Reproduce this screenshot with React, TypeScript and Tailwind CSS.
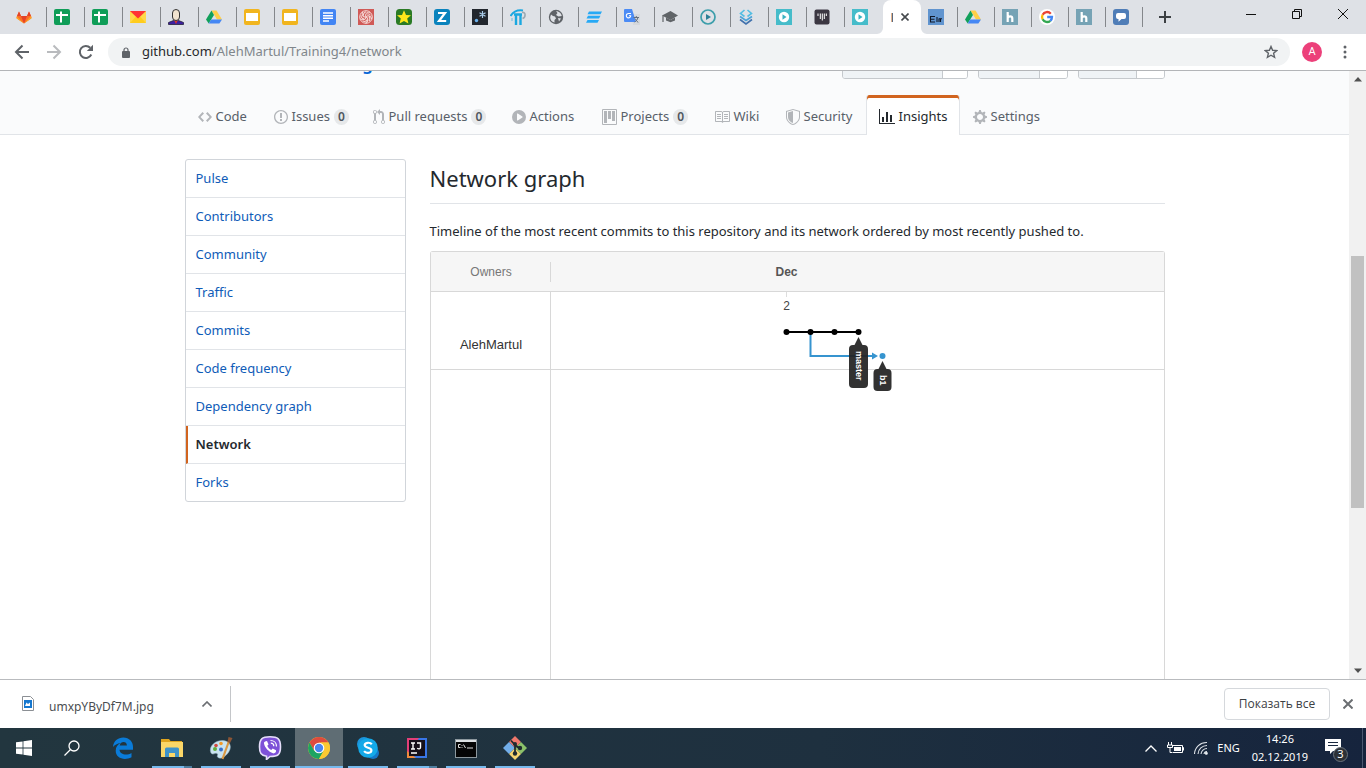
import React from "react";

type Kids = { children: React.ReactNode };

function Fav({ children }: Kids) {
  return (
    <svg viewBox="0 0 16 16" className="size-4" aria-hidden="true">
      {children}
    </svg>
  );
}

const Gitlab = () => (
  <Fav>
    <path d="M8 14.500 1 9.500l-.5-1.300L3 2.500l2 4.500h6l2-4.500 2.500 5.700L15 9.500z" fill="#fc6d26" />
    <path d="M8 14.500 5 7h6z" fill="#e24329" />
    <path d="M1 7 .3 9.200 8 14.500 .8 7.200zM15 7l.7 2.200L8 14.500z" fill="#fca326" />
    <path d="M3 2.500 1 7h4zM13 2.500l2 4.500h-4z" fill="#e24329" />
  </Fav>
);
const Sheets = () => (
  <Fav>
    <rect width="16" height="16" rx="2" fill="#0f9d58" />
    <path d="M2 6h12M7 2.500v11" stroke="#fff" strokeWidth="2" />
  </Fav>
);
const Mail = () => (
  <Fav>
    <rect y="2" width="16" height="12" fill="#ffd84a" />
    <path d="M0 14 6 7.500h4L16 14z" fill="#ffcc1e" />
    <path d="M0 2h16L8 9.500z" fill="#f33" />
  </Fav>
);
const Person = () => (
  <Fav>
    <path d="M.5 15.500v-2l5-2h5l5 2v2z" fill="#3b1fa0" stroke="#24203a" strokeWidth=".8" />
    <path d="m6 11 2 4 2-4z" fill="#d8342c" />
    <rect x="4.500" y=".5" width="7" height="11" rx="3.500" fill="#f1e3cf" stroke="#333" />
  </Fav>
);
const Drive = () => (
  <Fav>
    <path d="M5.500 1.500h5L16 10.500h-5z" fill="#ffcf48" />
    <path d="M5.500 1.500 0 10.500l2.700 4L8 6z" fill="#11a05b" />
    <path d="M5.200 10.500H16l-2.600 4H2.700z" fill="#4587f4" />
  </Fav>
);
const Slides = () => (
  <Fav>
    <rect width="16" height="16" rx="2" fill="#f1b51f" />
    <rect x="2" y="4" width="12" height="8" fill="#fff" />
  </Fav>
);
const Docs = () => (
  <Fav>
    <rect width="16" height="16" rx="2" fill="#4285f4" />
    <path d="M3 4h10M3 6.700h10M3 9.300h10M3 12h6" stroke="#fff" strokeWidth="1.500" />
  </Fav>
);
const Swirl = () => (
  <Fav>
    <rect width="16" height="16" fill="#d05a57" />
    <g fill="none" stroke="#f6d9d6" strokeWidth="1">
      <circle cx="8" cy="8" r="6.300" />
      {[0, 72, 144, 216, 288].map((a) => (
        <path key={a} d="M8 8C6.500 5.500 8.500 2.800 12 3.200M8.500 5.200C10 4.500 12 5 13 6.500" transform={`rotate(${a} 8 8)`} />
      ))}
    </g>
  </Fav>
);
const Star = () => (
  <Fav>
    <rect width="16" height="16" rx="3.500" fill="#2a7a25" />
    <path d="m8 1.200 2 4.700 5 .4-3.800 3.300L12.400 14.500 8 11.900l-4.400 2.600 1.200-4.900L1 6.300l5-.4z" fill="#ffe81a" />
  </Fav>
);
const ZIcon = () => (
  <Fav>
    <rect width="16" height="16" rx="3" fill="#0a83bd" />
    <path d="M4 4h7L5 12h7.200" fill="none" stroke="#fff" strokeWidth="2.200" />
  </Fav>
);
const DotStar = () => (
  <Fav>
    <rect width="16" height="16" fill="#22272e" />
    <circle cx="4.500" cy="11.500" r="1.700" fill="#6cb2ee" />
    <path d="M10.500 2v7M7.500 3.700l6 3.600M13.500 3.700l-6 3.600" stroke="#a9cbe8" strokeWidth="1.200" />
  </Fav>
);
const Bridge = () => (
  <Fav>
    <path d="M.5 7C3 3 8 .8 13 1.500" fill="none" stroke="#1ba8e0" strokeWidth="2" />
    <path d="M6 4.500V16M10.500 4.500V16M4 5.500h8" stroke="#1ba8e0" strokeWidth="2.400" />
    <path d="M12 3.500c4-1 4 5 .5 6" fill="none" stroke="#9aa9b3" strokeWidth="1.600" />
    <path d="M2 9v3" stroke="#8ac6de" strokeWidth="1.400" />
  </Fav>
);
const Globe = () => (
  <Fav>
    <circle cx="8" cy="8" r="7.200" fill="#5f6368" />
    <path d="M3 5.500 5 7l2 .5 1 2-1.500 1.500v2.500C3.500 13 2 10.500 2.200 8zM8 2.200 9.500 4 8 6l2.500 1.500 3.300-.5C13.500 4.500 11 2 8 2.200zM10 9l3 .5-2 3z" fill="#dee1e6" />
  </Fav>
);
const Bars = () => (
  <Fav>
    <path d="M3 2.500h13l-1.500 2.800H1.500zM2 6.700h12.500L13 9.500H.5zM1.500 11H13l-1.500 2.800H0z" fill="#27a9f5" />
  </Fav>
);
const Translate = () => (
  <Fav>
    <path d="M8 5h8v11H9z" fill="#d5d8dc" />
    <path d="M1 0h7l4 13H1a1 1 0 0 1-1-1V1a1 1 0 0 1 1-1z" fill="#4b8bf5" />
    <path d="M7 4.500H4.700a2.200 2.200 0 1 0 2 2.300H5" fill="none" stroke="#fff" strokeWidth="1.100" />
    <path d="M9.500 8.500H15M12.300 7v1.500M10.500 13c2-1 3-2.500 3.300-4.300M11 9.500l3 4" fill="none" stroke="#637080" />
  </Fav>
);
const Grad = () => (
  <Fav>
    <path d="m8.500 2 7.500 4.500-7.500 4.500L0 6.500z" fill="#606468" />
    <path d="M4 8.500 8.500 11 13 8.500v3l-4.500 1.800L4 11.500z" fill="#606468" />
    <path d="M1 6.500V13" stroke="#606468" strokeWidth="1.200" />
  </Fav>
);
const PlayRing = () => (
  <Fav>
    <circle cx="8" cy="8" r="7" fill="none" stroke="#3d9eab" strokeWidth="1.700" />
    <path d="m6 5 5 3-5 3z" fill="#2c7f96" />
  </Fav>
);
const Layers = () => (
  <Fav>
    <g fill="none" strokeWidth="1.600">
      <path d="M6.500 1 2.500 4.500 6.500 7.500M9.500 1l4 3.500-4 3" stroke="#52bde2" />
      <path d="m2 7.500 6 4 6-4" stroke="#4aa3d8" />
      <path d="m2 10.500 6 4.500 6-4.500" stroke="#4272ad" />
    </g>
  </Fav>
);
const PlayCyan = () => (
  <Fav>
    <rect width="16" height="16" fill="#46bcca" />
    <circle cx="8" cy="8" r="5.200" fill="#fff" />
    <path d="m6.500 5.200 4 2.800-4 2.800z" fill="#3ab2c1" />
  </Fav>
);
const DarkLines = () => (
  <Fav>
    <rect x=".5" y=".5" width="15" height="15" rx="2" fill="#3b3742" />
    <path d="M4 4.500v2.500M6.300 4.500v5.500M8.300 4.500v7M10.300 4.500V10M12.300 4.500v2.500" stroke="#fff" strokeWidth="1" />
  </Fav>
);
const Elm = () => (
  <Fav>
    <rect width="16" height="16" fill="#6094cf" />
    <path d="M7 7.500H2.500V13H7M2.500 10.200h4M9 8v5M11 13V9.500M11 9.700h3M12.500 10v3" fill="none" stroke="#101828" strokeWidth="1.100" />
  </Fav>
);
const HIcon = () => (
  <Fav>
    <rect width="16" height="16" fill="#76a3b5" />
    <path d="M5.700 3v10M5.700 9c.5-2 4.600-2.500 4.600.5V13" fill="none" stroke="#fff" strokeWidth="2.200" />
  </Fav>
);
const Google = () => (
  <Fav>
    <circle cx="8" cy="8" r="8" fill="#fff" />
    <g fill="none" strokeWidth="2.300">
      <path d="M11.800 4.700A5 5 0 0 0 3.600 5.700" stroke="#ea4335" />
      <path d="M3.600 5.700a5 5 0 0 0 0 4.600" stroke="#fbbc05" />
      <path d="M3.600 10.300a5 5 0 0 0 7.700 1.500" stroke="#34a853" />
      <path d="M11.300 11.800A5 5 0 0 0 13 8H8.200" stroke="#4285f4" />
    </g>
  </Fav>
);
const Chat = () => (
  <Fav>
    <rect width="16" height="16" rx="3" fill="#4f7db7" />
    <path d="M5 4h6a2 2 0 0 1 2 2v2a2 2 0 0 1-2 2H8.500L5.500 12.800V10H5a2 2 0 0 1-2-2V6a2 2 0 0 1 2-2z" fill="#fff" />
  </Fav>
);

const tabsBefore = [
  Gitlab, Sheets, Sheets, Mail, Person, Drive, Slides, Slides, Docs, Swirl, Star, ZIcon,
  DotStar, Bridge, Globe, Bars, Translate, Grad, PlayRing, Layers, PlayCyan, DarkLines, PlayCyan,
];
const tabsAfter = [Elm, Drive, HIcon, Google, HIcon, Chat];

function TabStrip() {
  return (
    <div className="flex h-[34px] shrink-0 items-center bg-[#dee1e6] pl-[9px]">
      {tabsBefore.map((Icon, i) => (
        <button
          key={i}
          aria-label={`Tab ${i + 1}`}
          className={`flex h-5 w-[38px] shrink-0 items-center pl-[7px] ${i < tabsBefore.length - 1 ? "border-r border-[#84878b]" : ""}`}
        >
          <Icon />
        </button>
      ))}
      <div className="relative flex h-full w-[38px] shrink-0 items-center gap-2 rounded-t-lg bg-white pl-2">
        <svg viewBox="0 0 6 6" className="absolute bottom-0 -left-[6px] size-[6px]" fill="#fff"><path d="M6 0v6H0a6 6 0 0 0 6-6z" /></svg>
        <svg viewBox="0 0 6 6" className="absolute -right-[6px] bottom-0 size-[6px]" fill="#fff"><path d="M0 0v6h6a6 6 0 0 1-6-6z" /></svg>
        <span className="flex h-[9px] w-[2px]">
          <span className="w-px bg-[#e3b48f]" />
          <span className="w-px bg-[#5a6a80]" />
        </span>
        <button aria-label="Close tab">
          <svg viewBox="0 0 8 8" className="size-2" stroke="#45494d" strokeWidth="1.600">
            <path d="m.5.5 7 7m0-7-7 7" />
          </svg>
        </button>
      </div>
      {tabsAfter.map((Icon, i) => (
        <button key={i} aria-label={`Tab ${i + 25}`} className="flex h-5 w-[37px] shrink-0 items-center border-r border-[#84878b] pl-[7px]">
          <Icon />
        </button>
      ))}
      <button aria-label="New tab" className="ml-4">
        <svg viewBox="0 0 12 12" className="size-3" stroke="#3c4043" strokeWidth="2">
          <path d="M6 0v12M0 6h12" />
        </svg>
      </button>
      <div className="mb-[6px] ml-auto flex items-center gap-9 pr-[18px]">
        <button aria-label="Minimize">
          <svg viewBox="0 0 10 10" className="size-[10px]" stroke="#111">
            <path d="M0 5.500h10" />
          </svg>
        </button>
        <button aria-label="Restore">
          <svg viewBox="0 0 10 10" className="size-[10px]" fill="none" stroke="#111">
            <path d="M.5 2.500h7v7h-7zM2.500 2.500v-2h7v7h-2" />
          </svg>
        </button>
        <button aria-label="Close">
          <svg viewBox="0 0 10 10" className="size-[10px]" stroke="#111">
            <path d="m0 0 10 10M10 0 0 10" />
          </svg>
        </button>
      </div>
    </div>
  );
}

function Toolbar() {
  return (
    <div className="flex h-9 shrink-0 items-center bg-white pr-[19px] pl-[14px] text-[#5f6368]">
      <div className="flex gap-4">
        <button aria-label="Back">
          <svg viewBox="0 0 16 16" className="size-4" fill="none" stroke="currentColor" strokeWidth="2">
            <path d="M15 8H2.500M8.500 1.500 2 8l6.500 6.500" />
          </svg>
        </button>
        <button aria-label="Forward" className="text-[#b9bbbe]">
          <svg viewBox="0 0 16 16" className="size-4" fill="none" stroke="currentColor" strokeWidth="2">
            <path d="M1 8h12.500M7.500 1.500 14 8l-6.500 6.500" />
          </svg>
        </button>
        <button aria-label="Reload">
          <svg viewBox="0 0 16 16" className="size-4">
            <path d="M13.300 10.500A6 6 0 1 1 12.200 3.800" fill="none" stroke="currentColor" strokeWidth="2" />
            <path d="M15 .8V7H8.800z" fill="currentColor" />
          </svg>
        </button>
      </div>
      <div className="ml-[14px] flex h-7 flex-1 items-center rounded-full bg-[#f1f3f4] pr-3 pl-[14px]">
        <svg viewBox="0 0 8 11" className="h-[11px] w-2">
          <rect y="4" width="8" height="7" rx="1" fill="currentColor" />
          <path d="M2 5V3a2 2 0 0 1 4 0v2" fill="none" stroke="currentColor" strokeWidth="1.200" />
        </svg>
        <div className="ml-3 flex-1 text-[13px] whitespace-nowrap text-[#80868b]">
          <span className="text-[#27292c]">github.com</span>/AlehMartul/Training4/network
        </div>
        <button aria-label="Bookmark this page">
          <svg viewBox="0 0 14 14" className="size-[14px]" fill="none" stroke="currentColor" strokeWidth="1.400">
            <path d="m7 1.500 1.600 3.800 4.100.3-3.100 2.700 1 4L7 10.200l-3.600 2.100 1-4L1.300 5.600l4.100-.3z" />
          </svg>
        </button>
      </div>
      <button aria-label="Profile" className="ml-3 flex size-5 items-center justify-center rounded-full bg-[#ec407a] font-[Roboto] text-[11px] text-white">
        A
      </button>
      <button aria-label="Menu" className="ml-[21px]">
        <svg viewBox="0 0 4 14" className="h-[14px] w-1" fill="currentColor">
          <circle cx="2" cy="2" r="1.500" />
          <circle cx="2" cy="7" r="1.500" />
          <circle cx="2" cy="12" r="1.500" />
        </svg>
      </button>
    </div>
  );
}

type NavItem = { label: string; w: number; cls: string; d: string; count?: number; active?: boolean };

const nav: NavItem[] = [
  { label: "Code", w: 14, cls: "w-[76px]", d: "M9.5 3L8 4.5 11.5 8 8 11.5 9.5 13 14 8 9.5 3zm-5 0L0 8l4.5 5L6 11.5 2.5 8 6 4.5 4.5 3z" },
  { label: "Issues", w: 14, cls: "w-[99px]", count: 0, d: "M7 2.3c3.14 0 5.7 2.56 5.7 5.7s-2.56 5.7-5.7 5.7A5.71 5.71 0 0 1 1.3 8c0-3.14 2.56-5.7 5.7-5.7zM7 1C3.14 1 0 4.14 0 8s3.14 7 7 7 7-3.14 7-7-3.14-7-7-7zm1 3H6v5h2V4zm0 6H6v2h2v-2z" },
  { label: "Pull requests", w: 12, cls: "w-[139px]", count: 0, d: "M11 11.28V5c-.03-.78-.34-1.47-.94-2.06C9.46 2.35 8.78 2.03 8 2H7V0L4 3l3 3V4h1c.27.02.48.11.69.31.21.2.3.42.31.69v6.28A1.993 1.993 0 0 0 10 15a1.993 1.993 0 0 0 1-3.72zm-1 2.92c-.66 0-1.2-.55-1.2-1.2 0-.65.55-1.2 1.2-1.2.65 0 1.2.55 1.2 1.2 0 .65-.55 1.2-1.2 1.2zM4 3c0-1.11-.89-2-2-2a1.993 1.993 0 0 0-1 3.72v6.56A1.993 1.993 0 0 0 2 15a1.993 1.993 0 0 0 1-3.72V4.72c.59-.34 1-.98 1-1.72zm-.8 10c0 .66-.55 1.2-1.2 1.2-.65 0-1.2-.55-1.2-1.2 0-.65.55-1.2 1.2-1.2.65 0 1.2.55 1.2 1.2zM2 4.2C1.34 4.2.8 3.65.8 3c0-.65.55-1.2 1.2-1.2.65 0 1.2.55 1.2 1.2 0 .65-.55 1.2-1.2 1.2z" },
  { label: "Actions", w: 14, cls: "w-[90px]", d: "M14 8A7 7 0 1 1 0 8a7 7 0 0 1 14 0zm-8.223 3.482l4.599-3.066a.5.5 0 0 0 0-.832L5.777 4.518A.5.5 0 0 0 5 4.934v6.132a.5.5 0 0 0 .777.416z" },
  { label: "Projects", w: 15, cls: "w-[112px]", count: 0, d: "M10 12h3V2h-3v10zm-4-2h3V2H6v8zm-4 4h3V2H2v12zm-1 1h13V1H1v14zM14 0H1a1 1 0 0 0-1 1v14a1 1 0 0 0 1 1h13a1 1 0 0 0 1-1V1a1 1 0 0 0-1-1z" },
  { label: "Wiki", w: 16, cls: "w-[72px]", d: "M3 5h4v1H3V5zm0 3h4V7H3v1zm0 2h4V9H3v1zm11-5h-4v1h4V5zm0 2h-4v1h4V7zm0 2h-4v1h4V9zm2-6v9c0 .55-.45 1-1 1H9.5l-1 1-1-1H2c-.55 0-1-.45-1-1V3c0-.55.45-1 1-1h5.5l1 1 1-1H15c.55 0 1 .45 1 1zm-8 .5L7.5 3H2v9h6V3.5zm7-.5H9.5l-.5.5V12h6V3z" },
  { label: "Security", w: 14, cls: "w-[93px]", d: "M0 2l7-2 7 2v6.02C14 12.69 8.69 16 7 16c-1.69 0-7-3.31-7-7.98V2zm1 .75L7 1l6 1.75v5.268C13 12.104 8.449 15 7 15c-1.449 0-6-2.896-6-6.982V2.75zm1 .75L7 2v12c-1.207 0-5-2.482-5-5.985V3.5z" },
  { label: "Insights", w: 16, cls: "w-[94px]", active: true, d: "M16 14v1H0V0h1v14h15zM5 13H3V8h2v5zm4 0H7V3h2v10zm4 0h-2V6h2v7z" },
  { label: "Settings", w: 14, cls: "w-[95px]", d: "M14 8.77v-1.6l-1.94-.64-.45-1.09.88-1.84-1.13-1.13-1.81.91-1.09-.45-.69-1.92h-1.6l-.63 1.94-1.11.45-1.84-.88-1.13 1.13.91 1.81-.45 1.09L0 7.23v1.59l1.94.64.45 1.09-.88 1.84 1.13 1.13 1.81-.91 1.09.45.69 1.92h1.59l.63-1.94 1.11-.45 1.84.88 1.13-1.13-.92-1.81.47-1.09L14 8.75v.02zM7 11c-1.66 0-3-1.34-3-3s1.34-3 3-3 3 1.34 3 3-1.34 3-3 3z" },
];

const repoActions = [
  { label: "Unwatch", wide: "w-[100px]", narrow: "w-[24px]" },
  { label: "Star", wide: "w-[61px]", narrow: "w-[27px]" },
  { label: "Fork", wide: "w-[58px]", narrow: "w-[27px]" },
];

function RepoHeader() {
  return (
    <header className="border-b border-[#e1e4e8] bg-[#fafbfc]">
      <div className="mx-auto max-w-[980px]">
        <div className="flex h-2 items-end justify-between overflow-hidden">
          <div className="mb-[3px] flex gap-1 pl-[18px] text-[17px] leading-6 text-[#0366d6]">
            <a href="#owner">AlehMartul</a>
            <span className="text-[#586069]">/</span>
            <a href="#repo" className="font-semibold">Training4</a>
          </div>
          <div className="flex gap-[10px]">
            {repoActions.map((a) => (
              <div key={a.label} className="flex h-7 overflow-hidden rounded-[3px] border border-[#c5c9cd]">
                <button aria-label={a.label} className={`${a.wide} border-r border-[#c5c9cd] bg-[#eff3f6]`} />
                <a href="#count" aria-label={`${a.label} count`} className={`${a.narrow} bg-white`} />
              </div>
            ))}
          </div>
        </div>
        <nav className="mt-4 -mb-px flex h-10 text-[13px] text-[#586069]">
          {nav.map((n) => (
            <a
              key={n.label}
              href={`#${n.label}`}
              className={`${n.cls} flex shrink-0 items-center gap-1 border-x px-3 pt-1 pb-px whitespace-nowrap ${
                n.active ? "rounded-t-[3px] border-[#e1e4e8] bg-white text-[#24292e] shadow-[inset_0_3px_0_#d1641f]" : "border-transparent"
              }`}
            >
              <svg viewBox={`0 0 ${n.w} 16`} width={n.w} height="16" fill="currentColor" fillRule="evenodd" className={n.active ? "shrink-0" : "shrink-0 text-[#b2b5b9]"}>
                <path d={n.d} />
              </svg>
              <span>{n.label}</span>
              {n.count !== undefined && (
                <span className="flex h-4 items-center rounded-full bg-[#e6e8ea] px-1 text-[12px] font-semibold text-[#4f565e]">{n.count}</span>
              )}
            </a>
          ))}
        </nav>
      </div>
    </header>
  );
}

const menu = ["Pulse", "Contributors", "Community", "Traffic", "Commits", "Code frequency", "Dependency graph", "Network", "Forks"];

function SideMenu() {
  return (
    <nav className="h-fit w-[221px] shrink-0 overflow-hidden rounded-[3px] border border-[#d1d5da] text-[13px]">
      {menu.map((m) => (
        <a
          key={m}
          href={`#${m}`}
          className={`flex h-[38px] items-center border-b border-[#e1e4e8] last:h-[37px] last:border-b-0 ${
            m === "Network" ? "border-l-2 border-l-[#d1641f] pl-2 font-semibold text-[#24292e]" : "pl-[10px] text-[#0f5cb8]"
          }`}
        >
          {m}
        </a>
      ))}
    </nav>
  );
}

function CommitGraph() {
  return (
    <svg viewBox="0 0 400 110" width="400" height="110" className="block overflow-visible font-['Liberation_Sans',sans-serif]">
      <path d="M235.500 0v5" stroke="#ddd" />
      <text x="235.500" y="18" textAnchor="middle" fontSize="12" fill="#444">2</text>
      <path d="M259.500 40v24H323" fill="none" stroke="#3694cf" strokeWidth="2" />
      <path d="m321 60.500 6 3.500-6 3.500z" fill="#3694cf" />
      <path d="M235 40h72" stroke="#000" strokeWidth="2" />
      {[235.5, 259.5, 283.5, 307.5].map((x) => (
        <circle key={x} cx={x} cy="40" r="3" fill="#000" />
      ))}
      <circle cx="331.500" cy="64" r="3" fill="#3694cf" />
      <g fill="#222" fillOpacity=".93">
        <path d="m307.500 45 4 8H313a4 4 0 0 1 4 4v35a4 4 0 0 1-4 4h-11a4 4 0 0 1-4-4V57a4 4 0 0 1 4-4h1.500z" />
        <path d="m331.500 69 4 8h1a4 4 0 0 1 4 4v14a4 4 0 0 1-4 4h-10a4 4 0 0 1-4-4V81a4 4 0 0 1 4-4h1z" />
      </g>
      <g fill="#fff" fontSize="9" fontWeight="700">
        <text transform="translate(305 59) rotate(90)">master</text>
        <text transform="translate(329 83) rotate(90)">b1</text>
      </g>
    </svg>
  );
}

function Network() {
  return (
    <main className="flex min-w-0 flex-1 flex-col">
      <h1 className="h-[45px] shrink-0 border-b border-[#e1e4e8] pt-px text-[22px] leading-9 text-[#24292e]">Network graph</h1>
      <p className="mt-4 mb-[9px] text-[13px] leading-[22px] text-[#24292e]">
        Timeline of the most recent commits to this repository and its network ordered by most recently pushed to.
      </p>
      <div className="flex flex-1 flex-col rounded-t-[3px] border border-b-0 border-[#d8d8d8] font-['Liberation_Sans',sans-serif] text-[12px]">
        <div className="flex h-10 shrink-0 items-center border-b border-[#d8d8d8] bg-[#f6f6f6]">
          <div className="flex h-5 w-[120px] items-center justify-center border-r border-[#d8d8d8] pl-[2px] text-[#777]">Owners</div>
          <div className="pl-[225px] font-bold text-[#555]">Dec</div>
        </div>
        <div className="flex h-[78px] shrink-0 border-b border-[#d8d8d8]">
          <div className="flex w-[120px] items-center justify-center border-r border-[#d8d8d8] pt-7 pl-[2px] text-[13px] text-[#333]">AlehMartul</div>
          <CommitGraph />
        </div>
        <div className="w-[120px] flex-1 border-r border-[#d8d8d8]" />
      </div>
    </main>
  );
}

function Scrollbar() {
  return (
    <div className="flex w-[17px] shrink-0 flex-col items-center bg-[#f1f1f1] py-[6px]" aria-hidden="true">
      <svg viewBox="0 0 8 5" className="h-[5px] w-2" fill="#505050"><path d="m4 0 4 4.500H0z" /></svg>
      <div className="grow-[173]" />
      <div className="w-[13px] grow-[252] bg-[#c1c1c1]" />
      <div className="grow-[159]" />
      <svg viewBox="0 0 8 5" className="h-[5px] w-2" fill="#505050"><path d="m4 5 4-4.500H0z" /></svg>
    </div>
  );
}

function DownloadBar() {
  return (
    <div className="flex h-[49px] shrink-0 items-center border-t border-[#b9bbbe] bg-white">
      <svg viewBox="0 0 12 15" className="mb-[2px] ml-[22px] h-[15px] w-3">
        <path d="M.5.500h8l3 3v11H.500z" fill="#fff" stroke="#8b8f94" />
        <rect x="2" y="4" width="8" height="8" fill="#1678cf" />
        <path d="m3 10 1.500-3.500L6 8l2-1.500V10z" fill="#fff" />
      </svg>
      <span className="mt-[5px] ml-[15px] w-[153px] text-[12px] text-[#4a4d51]">umxpYByDf7M.jpg</span>
      <button aria-label="Download options">
        <svg viewBox="0 0 10 6" className="h-[6px] w-[10px]" fill="none" stroke="#6b6e72" strokeWidth="1.600"><path d="m.5 5.500 4.500-4.500 4.500 4.500" /></svg>
      </button>
      <div className="ml-[18px] h-9 w-px bg-[#c4c6c9]" />
      <button className="ml-auto h-8 w-[106px] rounded border border-[#d5d8dc] font-['Open_Sans',sans-serif] text-[12px] whitespace-nowrap text-[#3c4043]">Показать все</button>
      <button aria-label="Close downloads bar" className="mr-[13px] ml-[13px]">
        <svg viewBox="0 0 10 10" className="size-[10px]" stroke="#6b6e72" strokeWidth="2"><path d="m.5.500 9 9m0-9-9 9" /></svg>
      </button>
    </div>
  );
}

function AppIcon({ children }: Kids) {
  return <svg viewBox="0 0 24 24" className="size-6" aria-hidden="true">{children}</svg>;
}

const apps = [
  {
    name: "Edge", bar: "", icon: (
      <AppIcon>
        <path d="M2 11C2.500 5 7 1.500 12.300 1.500c6 0 9.700 4.300 9.700 9.500v2.800H8.500c.3 5 7.500 6 12 3.200v4.300c-7 3.500-15.800 1.200-15.800-6.500 0-4 2-6.300 5-7.800-3.500.5-6 2-7.700 4zm6.700-1.500h7.200c0-4.700-6.500-4.500-7.200 0z" fill="#0a7bd8" />
      </AppIcon>
    ),
  },
  {
    name: "Explorer", bar: "split", icon: (
      <AppIcon>
        <path d="M1 3h8l1.500 2H22v6H1z" fill="#e0a51e" />
        <rect x="1" y="6" width="22" height="15" fill="#fbd768" />
        <path d="M5 21v-8a1.500 1.500 0 0 1 1.500-1.500h11A1.500 1.500 0 0 1 19 13v8h-4v-4H9v4z" fill="#3f93c9" />
      </AppIcon>
    ),
  },
  {
    name: "Paint", bar: "full", icon: (
      <AppIcon>
        <path d="M2 17C-1 10 7 4 14 4.500c7 .5 9 6 6 11s-8 8-11 6c-2-1.500 1-3-1-4s-4 2-6-.5z" fill="#c9e3f0" stroke="#9ab9c9" strokeWidth=".5" />
        <circle cx="6" cy="13" r="2" fill="#62ad3b" />
        <circle cx="7" cy="9.500" r="1.800" fill="#d24b3f" />
        <circle cx="12" cy="7.500" r="1.800" fill="#f39a29" />
        <circle cx="12" cy="13.500" r="2" fill="#386fca" />
        <path d="M20 5 13.500 23" stroke="#d99844" strokeWidth="2.200" />
        <path d="m18.500 6 1-5 4 1-2.500 5z" fill="#8d5535" />
      </AppIcon>
    ),
  },
  {
    name: "Viber", bar: "full", icon: (
      <AppIcon>
        <path d="M12 .8c8 0 10.500 2 10.500 10S20 20.500 12 20.500L8.500 23.500v-3.300C3 19.200 1.500 17 1.500 10.800 1.500 2.800 4 .8 12 .8z" fill="#7d51d8" stroke="#e6defa" strokeWidth="1.600" />
        <path d="M7 5.500 9 5l1.500 3.500-1.200 1.300c.7 2 2 3.300 4 4.200l1.400-1.500 3.300 1.800c.5 2-1.500 3.500-3 3-4.500-1.800-8-5.300-9-9.800C5.800 6.500 6.300 6 7 5.500z" fill="#fff" />
        <path d="M12.500 4.500c3.500 0 6 2.500 6 6M12.800 7.200c2 0 3 1.200 3 3" fill="none" stroke="#fff" strokeWidth="1.200" />
      </AppIcon>
    ),
  },
  {
    name: "Chrome", bar: "active", icon: (
      <AppIcon>
        <circle cx="12" cy="12" r="11" fill="#fbc932" />
        <path d="M2.500 6.500A11 11 0 0 1 21.500 6.500H12L7.200 14.800z" fill="#dd4b3e" />
        <path d="M2.500 6.500 7.200 14.800 16.700 14.800 12 23A11 11 0 0 1 2.500 6.500z" fill="#1da462" />
        <path d="M21.500 6.500A11 11 0 0 1 12 23l4.800-8.300L14 6.500z" fill="#fbc932" />
        <circle cx="12" cy="12" r="5.300" fill="#fff" />
        <circle cx="12" cy="12" r="4.200" fill="#4a86ef" />
      </AppIcon>
    ),
  },
  {
    name: "Skype", bar: "full", icon: (
      <AppIcon>
        <circle cx="8" cy="8" r="7" fill="#1b95dc" />
        <circle cx="17" cy="17" r="6" fill="#1478c8" />
        <circle cx="12" cy="12" r="9.800" fill="#13a9e8" />
        <path d="M15.800 8.200C14 6 8.500 6.300 8.700 9.300c.2 3.200 6.900 1.800 6.700 5.200-.2 3-5.600 3-7.300.7" fill="none" stroke="#fff" strokeWidth="2.200" />
      </AppIcon>
    ),
  },
  {
    name: "IntelliJ", bar: "split", icon: (
      <AppIcon>
        <path d="M2 2h20v20H2z" fill="#3976e8" />
        <path d="M2 2h12L2 19z" fill="#e33f78" />
        <path d="M2 15v7h9z" fill="#f08a3c" />
        <rect x="4" y="4" width="16" height="16" fill="#15101a" />
        <path d="M6 7h4M8 7v6M6 13h4M12 7h3.500v4.500c0 1.500-2 1.800-3.300.8M6 17h6" fill="none" stroke="#fff" strokeWidth="1.400" />
      </AppIcon>
    ),
  },
  {
    name: "Command Prompt", bar: "full", icon: (
      <AppIcon>
        <rect x="1.500" y="3.500" width="21" height="18" fill="#050505" stroke="#8d989e" />
        <path d="M2 5h20" stroke="#dce0e2" strokeWidth="2" />
        <path d="M6.500 8.500H4.500v3h2M8 9v.8M8 11v.8M9.500 8.500l2 3.500M13 12h6" fill="none" stroke="#ddd" />
      </AppIcon>
    ),
  },
  {
    name: "Git", bar: "full", icon: (
      <AppIcon>
        <path d="m12 0 6 6-6 6-6-6z" fill="#f0786c" />
        <path d="m18 6 6 6-6 6-6-6z" fill="#8cc16a" />
        <path d="m6 6 6 6-6 6-6-6z" fill="#72aee9" />
        <path d="m12 12 6 6-6 6-6-6z" fill="#f6d470" />
        <path d="M8 4.500 12 9v9M12 9c2 2 3 3 5 3" fill="none" stroke="#202b2f" strokeWidth="1.800" />
        <g fill="#202b2f"><circle cx="12" cy="8" r="2" /><circle cx="17" cy="12" r="2.200" /><circle cx="12" cy="17.500" r="2.200" /></g>
      </AppIcon>
    ),
  },
];

function Taskbar() {
  return (
    <div className="flex h-10 shrink-0 items-stretch bg-linear-to-r from-[#22363f] via-[#1e303f] via-60% to-[#16243d] text-white">
      <button aria-label="Start" className="flex w-12 items-center justify-center">
        <svg viewBox="0 0 16 16" className="size-4" fill="#fff"><path d="M0 2.300 6.600 1.400v6.200H0zM7.400 1.300 16 0v7.600H7.400zM0 8.400h6.600v6.200L0 13.700zM7.400 8.400H16V16l-8.600-1.200z" /></svg>
      </button>
      <button aria-label="Search" className="mr-[3px] flex w-12 items-center justify-center">
        <svg viewBox="0 0 16 16" className="size-4" fill="none" stroke="#fff" strokeWidth="1.300"><circle cx="10" cy="6" r="5" /><path d="M6.500 9.500.5 15.500" /></svg>
      </button>
      <div className="flex gap-px">
        {apps.map((a) => (
          <button key={a.name} aria-label={a.name} className={`flex w-12 flex-col items-center justify-between pt-2 ${a.bar === "active" ? "bg-[#5f6d74]" : ""}`}>
            {a.icon}
            {a.bar === "active" && <span className="h-[2px] w-12 bg-[#76b9ed]" />}
            {a.bar === "full" && <span className="h-[2px] w-10 bg-[#76b9ed]" />}
            {a.bar === "split" && (
              <span className="flex h-[2px] w-10"><span className="flex-1 bg-[#76b9ed]" /><span className="w-2 bg-[#4e7d9f]" /></span>
            )}
          </button>
        ))}
      </div>
      <div className="ml-auto flex items-center text-[11px]">
        <button aria-label="Hidden icons">
          <svg viewBox="0 0 12 7" className="h-[7px] w-3" fill="none" stroke="#fff" strokeWidth="1.300"><path d="m.5 6.500L6 1l5.500 5.500" /></svg>
        </button>
        <svg viewBox="0 0 17 12" className="ml-[10px] h-3 w-[17px]" fill="none" stroke="#fff">
          <path d="M5 3.500h10.500v7H5.500M15.500 5.500h1v3" />
          <path d="M7 5h7v4H7z" fill="#fff" stroke="none" />
          <path d="M1.500 0v3M4.500 0v3M.5 3h5v2.500h-5zM3 6v4.500h2" />
        </svg>
        <svg viewBox="0 0 14 14" className="ml-[10px] size-[14px]" fill="none" stroke="#dfe4e9" strokeWidth="1.100">
          <path d="M.5 13A12 12 0 0 1 13 1.500M4 13a9 9 0 0 1 9-8.500M7 13a6 6 0 0 1 6-5.500M10 13a3 3 0 0 1 3-2.500" />
          <circle cx="12.300" cy="12.300" r="1" fill="#fff" />
        </svg>
        <span className="ml-[9px]">ENG</span>
        <div className="ml-3 text-center leading-[18px] whitespace-nowrap">
          <div>14:26</div>
          <div>02.12.2019</div>
        </div>
        <button aria-label="Notifications" className="relative mr-[14px] ml-4 h-7 w-6">
          <svg viewBox="0 0 24 28" className="h-7 w-6">
            <path d="M1 5h16v12H9l-3 3v-3H1z" fill="#fff" />
            <path d="M4 8.500h10M4 11.500h10" stroke="#1a2940" />
            <circle cx="16.500" cy="20.500" r="7" fill="#2c3137" stroke="#6a737c" />
          </svg>
          <span className="absolute right-0 bottom-0 flex size-[15px] items-center justify-center text-[11px]">3</span>
        </button>
      </div>
      <div className="mr-[3px] w-px bg-[#4b5870]" />
    </div>
  );
}

export default function App() {
  return (
    <div className="flex h-screen flex-col overflow-hidden bg-white font-['Noto_Sans',sans-serif]">
      <TabStrip />
      <Toolbar />
      <div className="flex min-h-0 flex-1 border-t border-[#b3b5b8]">
        <div className="flex min-w-0 flex-1 flex-col">
          <RepoHeader />
          <div className="mx-auto flex min-h-0 w-full max-w-[980px] flex-1 gap-6 pt-6">
            <SideMenu />
            <Network />
          </div>
        </div>
        <Scrollbar />
      </div>
      <DownloadBar />
      <Taskbar />
    </div>
  );
}
